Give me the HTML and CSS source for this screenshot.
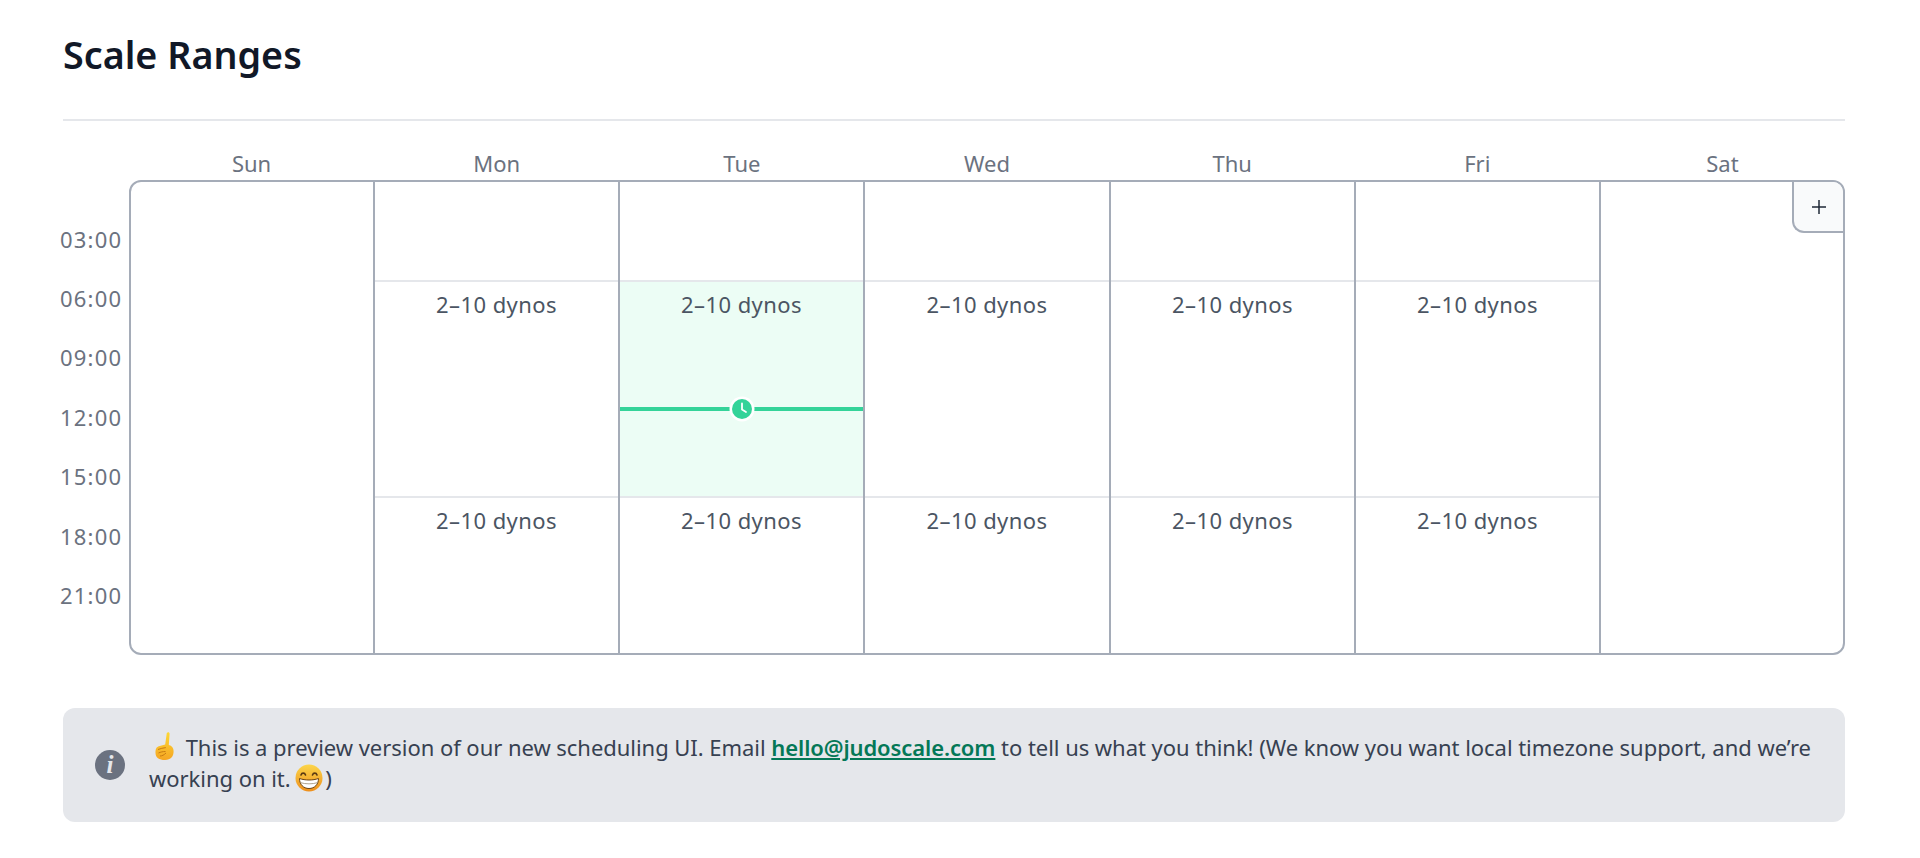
FILE: index.html
```html
<!DOCTYPE html>
<html lang="en">
<head>
    <meta charset="UTF-8">
    <title>Scale Ranges</title>
    <link rel="stylesheet" href="styles.css">
</head>
<body>
    <div class="page">
        <h1 class="title">Scale Ranges</h1>

        <div class="schedule">
            <div class="days">
                <div>Sun</div><div>Mon</div><div>Tue</div><div>Wed</div><div>Thu</div><div>Fri</div><div>Sat</div>
            </div>
            <div class="schedule-body">
                <div class="hours">
                    <div>03:00</div><div>06:00</div><div>09:00</div><div>12:00</div><div>15:00</div><div>18:00</div><div>21:00</div>
                </div>
                <div class="week">
                    <div class="day"></div>
                    <div class="day">
                        <div class="range range-first">2–10 dynos</div>
                        <div class="range range-last">2–10 dynos</div>
                    </div>
                    <div class="day">
                        <div class="range range-first range-active">
                            2–10 dynos
                            <div class="now">
                                <svg class="now-icon" viewBox="0 0 26 26" width="26" height="26">
                                    <circle cx="13" cy="13" r="12.5" fill="#fff"/>
                                    <circle cx="13" cy="13" r="10" fill="#34d399"/>
                                    <path d="M13 7.5V13.5L17 16" fill="none" stroke="#fff" stroke-width="1.8" stroke-linecap="round" stroke-linejoin="round"/>
                                </svg>
                            </div>
                        </div>
                        <div class="range range-last">2–10 dynos</div>
                    </div>
                    <div class="day">
                        <div class="range range-first">2–10 dynos</div>
                        <div class="range range-last">2–10 dynos</div>
                    </div>
                    <div class="day">
                        <div class="range range-first">2–10 dynos</div>
                        <div class="range range-last">2–10 dynos</div>
                    </div>
                    <div class="day">
                        <div class="range range-first">2–10 dynos</div>
                        <div class="range range-last">2–10 dynos</div>
                    </div>
                    <div class="day"></div>
                    <button class="add-btn" aria-label="Add range">
                        <svg viewBox="0 0 16 16" width="16" height="16"><path d="M8 1V15M1 8H15" stroke="#1f2937" stroke-width="1.5" fill="none"/></svg>
                    </button>
                </div>
            </div>
        </div>

        <div class="notice">
            <svg class="notice-icon" viewBox="0 0 30 30" width="30" height="30">
                <circle cx="15" cy="15" r="15" fill="#6b7280"/>
                <text x="15" y="22.500" text-anchor="middle" class="notice-i">i</text>
            </svg>
            <p class="notice-text">
                <svg class="emoji emoji-hand" viewBox="0 0 30 30" width="30" height="30" role="img" aria-label="point up">
                    <defs>
                        <linearGradient id="skin" x1="0" y1="0" x2="0" y2="1">
                            <stop offset="0" stop-color="#fdd835"/>
                            <stop offset="1" stop-color="#f5a623"/>
                        </linearGradient>
                    </defs>
                    <path d="M17.800 2C18.800.6 20.600 1 20.600 2.800L19.800 14C23 14.800 24.600 17 24.600 20C24.600 25.500 22 29 16 29C10 29 6.500 26.500 6.500 22C6.500 18.500 7 16 9.800 15.200L16.200 13.600Z" fill="url(#skin)"/>
                    <path d="M9 18.500C11.500 17.500 14 17 16.800 16.600M9.500 22C11.500 21 14 20.500 16.500 20.500M11 25C13 25 15 24 17 22" fill="none" stroke="#c77a12" stroke-width="1"/>
                </svg>
                This is a preview version of our new scheduling UI. Email <a href="#" class="notice-link">hello@judoscale.com</a> to tell us what you think! (We know you want local timezone support, and we’re<br>working on it.
                <svg class="emoji emoji-grin" viewBox="0 0 28 28" width="28" height="28" role="img" aria-label="grin">
                    <defs>
                        <linearGradient id="face" x1="0" y1="0" x2="0" y2="1">
                            <stop offset="0" stop-color="#fcd64a"/>
                            <stop offset="1" stop-color="#ee8f1c"/>
                        </linearGradient>
                    </defs>
                    <circle cx="14" cy="14" r="13.500" fill="url(#face)"/>
                    <path d="M6 11C6.800 8.500 9.700 8.500 10.500 11M17.500 11C18.300 8.500 21.200 8.500 22 11" fill="none" stroke="#5b3a12" stroke-width="1.600" stroke-linecap="round"/>
                    <path d="M4.500 14.500C10 16.500 18 16.500 23.500 14.500C23.500 20.500 19.500 24.500 14 24.500C8.500 24.500 4.500 20.500 4.500 14.500Z" fill="#fff" stroke="#6b4313" stroke-width="1"/>
                    <path d="M5 18.500C10.500 20.300 17.500 20.300 23 18.500" fill="none" stroke="#9a8a70" stroke-width=".8"/>
                </svg>)
            </p>
        </div>
    </div>
</body>
</html>
```

FILE: styles.css
```css
* {
    box-sizing: border-box;
}
body {
    margin: 0;
    background-color: white;
    font-family: "Noto Sans", Arial, sans-serif;
    font-size: 22px;
    line-height: 30px;
    color: #4b5563;
}
.page {
    padding: 0 75px 36px 63px;
}
.title {
    margin: 0;
    height: 121px;
    padding-top: 32px;
    border-bottom: 2px solid #e5e7eb;
    font-size: 37.7px;
    line-height: 46px;
    font-weight: 600;
    color: #111827;
}
.schedule {
    padding-top: 27px;
}
.days {
    display: grid;
    grid-template-columns: repeat(7, 1fr);
    margin-left: 66px;
    height: 32px;
    text-align: center;
    color: #6b7280;
}
.schedule-body {
    display: flex;
}
.hours {
    width: 66px;
    margin-left: -3px;
    padding-top: 29px;
    color: #6b7280;
    letter-spacing: 1.2px;
}
.hours div {
    height: 59.4px;
    display: flex;
    align-items: center;
}
.week {
    position: relative;
    flex: 1;
    margin-left: 3px;
    display: grid;
    grid-template-columns: 244px 245px 245px 246px 245px 245px 1fr;
    height: 475px;
    border: 2px solid #a5acb8;
    border-radius: 12px;
    overflow: hidden;
}
.day {
    border-right: 2px solid #a5acb8;
    padding-top: 98px;
}
.day:last-of-type {
    border-right: none;
}
.range {
    position: relative;
    border-top: 2px solid #e5e7eb;
    padding-top: 7px;
    text-align: center;
    letter-spacing: 0.45px;
}
.range-first {
    height: 216px;
}
.range-active {
    background-color: #ecfdf5;
}
.now {
    position: absolute;
    left: 0;
    right: 0;
    top: 125px;
    height: 4px;
    background-color: #34d399;
}
.now-icon {
    position: absolute;
    left: 50%;
    top: 2px;
    margin-left: -13px;
    margin-top: -13px;
}
.add-btn {
    position: absolute;
    top: 0;
    right: 0;
    width: 51px;
    height: 51px;
    display: flex;
    align-items: center;
    justify-content: center;
    padding: 0;
    background-color: #f9fafb;
    border: none;
    border-left: 2px solid #a5acb8;
    border-bottom: 2px solid #a5acb8;
    border-bottom-left-radius: 12px;
}
.notice {
    display: flex;
    align-items: center;
    margin-top: 53px;
    height: 114px;
    padding: 0 20px 0 32px;
    background-color: #e5e7eb;
    border-radius: 12px;
    color: #374151;
}
.notice-icon {
    flex-shrink: 0;
    margin-right: 24px;
}
.notice-i {
    font-family: "Liberation Serif", serif;
    font-size: 25px;
    font-weight: 700;
    font-style: italic;
    fill: #e5e7eb;
}
.notice-text {
    margin: 0;
    padding-bottom: 4px;
    line-height: 31px;
    letter-spacing: -0.04px;
}
.notice-link {
    color: #047857;
    font-weight: 600;
    letter-spacing: -0.1px;
}
.emoji {
    vertical-align: 1px;
    margin: -6px 0;
}
.emoji-hand {
    margin-right: 1px;
}
.emoji-grin {
    margin-left: -1px;
    margin-right: 2px;
}
```
